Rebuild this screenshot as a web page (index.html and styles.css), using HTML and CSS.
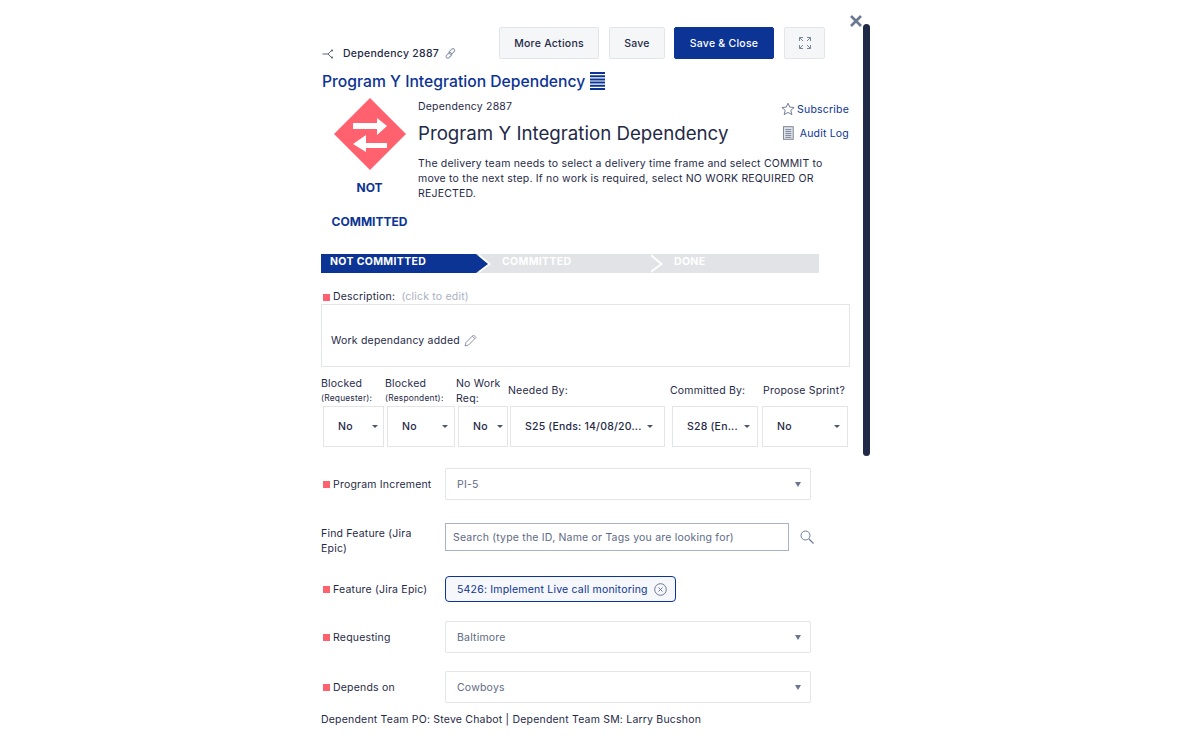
FILE: index.html
```html
<!DOCTYPE html>
<html lang="en">
<head>
    <meta charset="UTF-8">
    <meta name="viewport" content="width=device-width, initial-scale=1.0">
    <title>Dependency 2887</title>
    <link rel="stylesheet" href="styles.css">
</head>
<body>
    <button class="close-btn" aria-label="Close">
        <svg width="14" height="14" viewBox="0 0 14 14"><path d="M2 2 L12 12 M12 2 L2 12" stroke="#6b7690" stroke-width="2.6" fill="none"/></svg>
    </button>
    <div class="scrollbar"></div>

    <div class="container">
        <div class="top-row">
            <div class="crumb">
                <svg class="crumb-icon" width="12" height="10" viewBox="0 0 12 10"><path d="M0.5 5 H6 L9.5 1.5 M6 5 L9.5 8.5" stroke="#4a556f" stroke-width="0.9" fill="none"/><circle cx="10" cy="1.5" r="1" fill="#4a556f"/><circle cx="10" cy="8.5" r="1" fill="#4a556f"/></svg>
                <span class="crumb-text">Dependency 2887</span>
                <svg width="11" height="11" viewBox="0 0 11 11"><g fill="none" stroke="#8a93a8" stroke-width="1"><rect x="5.2" y="0.3" width="3.4" height="6.4" rx="1.7" transform="rotate(45 6.9 3.5)"/><rect x="2.2" y="4.2" width="3.4" height="6.4" rx="1.7" transform="rotate(45 3.9 7.4)"/></g></svg>
            </div>
            <div class="actions">
                <button class="btn btn-more">More Actions</button>
                <button class="btn btn-save">Save</button>
                <button class="btn btn-primary">Save &amp; Close</button>
                <button class="btn btn-expand" aria-label="Expand">
                    <svg width="12" height="12" viewBox="0 0 12 12"><path d="M0.5 4 V0.5 H4 M0.5 0.5 L4 4 M8 0.5 H11.5 V4 M11.5 0.5 L8 4 M0.5 8 V11.5 H4 M0.5 11.5 L4 8 M8 11.5 H11.5 V8 M11.5 11.5 L8 8" stroke="#7b8599" stroke-width="1" fill="none"/></svg>
                </button>
            </div>
        </div>

        <h2 class="page-title">Program Y Integration Dependency
            <svg width="15" height="20" viewBox="0 0 15 20"><path d="M0 1 H15 M0 4.2 H15 M0 7.4 H15 M0 10.6 H15 M0 13.8 H15 M0 17 H15" stroke="#0c3494" stroke-width="2" fill="none"/></svg>
        </h2>

        <div class="summary">
            <div class="status-col">
                <svg width="72" height="72" viewBox="0 0 72 72">
                    <path d="M36 0 L72 36 L36 72 L0 36 Z" fill="#ff626e"/>
                    <path d="M19 25 H43 V20 L53 28 L43 37 V31 H19 Z" fill="#fff"/>
                    <path d="M53 45 H32 V37 L19 46 L32 54 V50 H53 Z" fill="#fff"/>
                </svg>
                <div class="status-label">NOT</div>
                <div class="status-label">COMMITTED</div>
            </div>
            <div class="summary-main">
                <div class="summary-id">Dependency 2887</div>
                <h1 class="summary-title">Program Y Integration Dependency</h1>
                <p class="summary-text">The delivery team needs to select a delivery time frame and select COMMIT to move to the next step. If no work is required, select NO WORK REQUIRED OR REJECTED.</p>
            </div>
            <div class="summary-links">
                <a class="side-link">
                    <svg width="15" height="14" viewBox="0 0 15 14"><path d="M7.5 0.8 L9.4 5 L14 5.4 L10.5 8.4 L11.6 13 L7.5 10.6 L3.4 13 L4.5 8.4 L1 5.4 L5.6 5 Z" fill="none" stroke="#6b7690" stroke-width="1"/></svg>
                    Subscribe
                </a>
                <a class="side-link side-link-log">
                    <svg width="11" height="14" viewBox="0 0 11 14"><rect x="0.5" y="0.5" width="10" height="13" fill="#dfe2e8" stroke="#7b8599"/><path d="M2.5 3.5 H8.5 M2.5 5.5 H8.5 M2.5 7.5 H8.5 M2.5 9.5 H8.5 M2.5 11.5 H8.5" stroke="#7b8599" stroke-width="1"/></svg>
                    Audit Log
                </a>
            </div>
        </div>

        <div class="steps">
            <div class="step step-active">NOT COMMITTED</div>
            <div class="step step-two">COMMITTED</div>
            <div class="step step-three">DONE</div>
        </div>

        <div class="desc-label"><span class="req"></span>Description: <span class="hint">(click to edit)</span></div>
        <div class="desc-box">
            Work dependancy added
            <svg width="13" height="13" viewBox="0 0 13 13"><path d="M1 12 L2 8.5 L9.5 1 L12 3.5 L4.5 11 Z M8.3 2.2 L10.8 4.7" fill="none" stroke="#8a93a8" stroke-width="1"/></svg>
        </div>

        <div class="fields">
            <div class="field field-a">
                <label>Blocked<small>(Requester):</small></label>
                <div class="mini-select">No</div>
            </div>
            <div class="field field-b">
                <label>Blocked<small>(Respondent):</small></label>
                <div class="mini-select">No</div>
            </div>
            <div class="field field-c">
                <label>No Work Req:</label>
                <div class="mini-select">No</div>
            </div>
            <div class="field field-d">
                <label>Needed By:</label>
                <div class="mini-select">S25 (Ends: 14/08/20...</div>
            </div>
            <div class="field field-e">
                <label>Committed By:</label>
                <div class="mini-select">S28 (En...</div>
            </div>
            <div class="field field-f">
                <label>Propose Sprint?</label>
                <div class="mini-select">No</div>
            </div>
        </div>

        <div class="form-row row-pi">
            <div class="form-label"><span class="req"></span>Program Increment</div>
            <div class="select-box">PI-5</div>
        </div>
        <div class="form-row row-find">
            <div class="form-label label-wrap">Find Feature (Jira Epic)</div>
            <div class="search-box">Search (type the ID, Name or Tags you are looking for)</div>
            <svg class="search-icon" width="14" height="14" viewBox="0 0 14 14"><circle cx="5.5" cy="5.5" r="4.5" fill="none" stroke="#6b7f9c" stroke-width="1"/><path d="M9 9 L13.5 13.5" stroke="#6b7f9c" stroke-width="1.2"/></svg>
        </div>
        <div class="form-row row-feature">
            <div class="form-label"><span class="req"></span>Feature (Jira Epic)</div>
            <div class="tag">5426: Implement Live call monitoring
                <svg width="13" height="13" viewBox="0 0 13 13"><circle cx="6.5" cy="6.5" r="5.8" fill="none" stroke="#5e6a85" stroke-width="0.9"/><path d="M4.5 4.5 L8.5 8.5 M8.5 4.5 L4.5 8.5" stroke="#5e6a85" stroke-width="0.9"/></svg>
            </div>
        </div>
        <div class="form-row row-req">
            <div class="form-label"><span class="req"></span>Requesting</div>
            <div class="select-box">Baltimore</div>
        </div>
        <div class="form-row row-dep">
            <div class="form-label"><span class="req"></span>Depends on</div>
            <div class="select-box">Cowboys</div>
        </div>
        <div class="team-line">Dependent Team PO: Steve Chabot | Dependent Team SM: Larry Bucshon</div>
    </div>
</body>
</html>
```

FILE: styles.css
```css
html, body {
    margin: 0;
    height: 100%;
    overflow: hidden;
    background: #fff;
}

body {
    font-family: Inter, "Noto Sans", sans-serif;
    font-size: 10.5px;
    letter-spacing: 0.2px;
    color: #1f2a47;
    position: relative;
}

.container {
    width: 530px;
    margin-left: 321px;
    padding-top: 27px;
}

.close-btn {
    position: absolute;
    left: 849px;
    top: 14px;
    padding: 0;
    border: none;
    background: none;
    line-height: 0;
}

.scrollbar {
    position: absolute;
    left: 863px;
    top: 24px;
    width: 7px;
    height: 432px;
    background: #1f2a47;
    border-radius: 4px;
}

.top-row {
    display: flex;
    justify-content: space-between;
    align-items: flex-end;
    width: 504px;
}

.crumb {
    display: flex;
    align-items: center;
    margin-bottom: -1px;
}

.crumb-icon {
    margin: 0 9px 0 1px;
}

.crumb-text {
    font-weight: 500;
    letter-spacing: 0.27px;
    margin-right: 6px;
}

.actions {
    display: flex;
}

.btn {
    height: 32px;
    font-family: inherit;
    font-size: 10.5px;
    font-weight: 500;
    letter-spacing: 0.25px;
    color: #1f2a47;
    background: #f5f6f7;
    border: 1px solid #e3e5e9;
    border-radius: 2px;
    padding: 0;
}

.btn-more { width: 100px; margin-right: 10px; }
.btn-save { width: 56px; margin-right: 9px; }
.btn-primary { width: 100px; margin-right: 10px; background: #0c3494; border-color: #0c3494; color: #fff; }
.btn-expand { width: 41px; line-height: 0; }

.page-title {
    margin: 11px 0 0 1px;
    height: 24px;
    font-size: 15.7px;
    font-weight: 500;
    line-height: 24px;
    letter-spacing: 0;
    color: #0c3494;
    display: flex;
    align-items: center;
    gap: 5px;
}

.summary {
    display: flex;
    margin-top: 3px;
}

.status-col {
    width: 97px;
    flex-shrink: 0;
    text-align: center;
}

.status-col svg {
    display: block;
    margin: 1px 0 1px 13px;
}

.status-label {
    font-size: 12px;
    font-weight: 700;
    letter-spacing: 0;
    color: #0c3494;
    line-height: 34px;
}

.summary-main {
    width: 412px;
    flex-shrink: 0;
}

.summary-id {
    line-height: 14px;
    margin-top: 3px;
}

.summary-title {
    margin: 6px 0 0;
    font-size: 18.7px;
    font-weight: 400;
    line-height: 28px;
    letter-spacing: 0;
}

.summary-text {
    margin: 8px 0 0;
    line-height: 15px;
}

.summary-links {
    width: 68px;
    flex-shrink: 0;
    margin-left: -49px;
    margin-top: 5px;
}

.side-link {
    display: flex;
    align-items: center;
    gap: 2px;
    height: 14px;
    margin-bottom: 10px;
    color: #0c3494;
    white-space: nowrap;
}

.side-link-log {
    gap: 6px;
    margin-left: 2px;
}

.steps {
    display: flex;
    width: 498px;
    height: 19px;
    margin-top: 15px;
    background: #e1e3e6;
    color: #fff;
    font-weight: 700;
    line-height: 15px;
    letter-spacing: 0.35px;
}

.step {
    position: relative;
    height: 19px;
    box-sizing: border-box;
}

.step-active {
    width: 155px;
    padding-left: 9px;
    background: #0c3494;
}

.step-active::after,
.step-two::after {
    content: "";
    position: absolute;
    top: 0;
    border-left: 12px solid #0c3494;
    border-top: 10px solid transparent;
    border-bottom: 9px solid transparent;
    filter: drop-shadow(3px 0 0 #fff);
    z-index: 1;
}

.step-active::after {
    left: 155px;
}

.step-two {
    width: 174px;
    padding-left: 26px;
}

.step-two::after {
    left: 172px;
    border-left-color: #e1e3e6;
}

.step-three {
    padding-left: 24px;
}

.desc-label {
    margin-top: 17px;
    line-height: 14px;
    display: flex;
    align-items: center;
    white-space: pre;
}

.req {
    width: 7px;
    height: 7px;
    background: #ff626e;
    margin: 0 3px 0 2px;
    flex-shrink: 0;
}

.hint {
    color: #a9b0bf;
    margin-left: 3px;
}

.desc-box {
    height: 63px;
    box-sizing: border-box;
    border: 1px solid #e3e5e9;
    padding: 9px 0 0 9px;
    display: flex;
    align-items: center;
    gap: 4px;
    width: 529px;
}

.fields {
    display: flex;
    align-items: flex-end;
    margin-top: 9px;
}

.field label {
    display: block;
    line-height: 15px;
}

.field small {
    display: block;
    font-size: 8.4px;
    line-height: 15px;
}

.field-d label,
.field-e label,
.field-f label {
    margin-bottom: 8px;
}

.mini-select {
    height: 41px;
    box-sizing: border-box;
    border: 1px solid #e3e5e9;
    padding-left: 14px;
    font-weight: 500;
    display: flex;
    align-items: center;
    position: relative;
    white-space: nowrap;
}

.mini-select::after {
    content: "";
    position: absolute;
    top: 18px;
    right: 5px;
    border-left: 3.5px solid transparent;
    border-right: 3.5px solid transparent;
    border-top: 3.5px solid #4a556f;
}

.field-a { width: 64px; }
.field-a .mini-select { width: 61px; margin-left: 2px; }
.field-b { width: 73px; }
.field-b .mini-select { width: 68px; margin-left: 2px; }
.field-b .mini-select::after { right: 6px; }
.field-c { width: 52px; margin-left: -2px; }
.field-c .mini-select { width: 50px; margin-left: 2px; }
.field-c .mini-select::after { right: 4px; }
.field-d { width: 157px; }
.field-d .mini-select { width: 155px; margin-left: 2px; }
.field-d .mini-select::after { right: 11px; }
.field-e { width: 88px; margin-left: 5px; }
.field-e .mini-select { width: 86px; margin-left: 2px; }
.field-e .mini-select::after { right: 7px; }
.field-f { margin-left: 5px; }
.field-f .mini-select { width: 86px; margin-left: -1px; }
.field-f .mini-select::after { right: 7px; }

.form-row {
    display: flex;
    align-items: center;
}

.form-label {
    width: 124px;
    flex-shrink: 0;
    display: flex;
    align-items: center;
    line-height: 15px;
}

.label-wrap {
    box-sizing: border-box;
    padding-right: 18px;
    margin-top: 4px;
    margin-bottom: -4px;
}

.select-box {
    width: 366px;
    height: 32px;
    box-sizing: border-box;
    border: 1px solid #e3e5e9;
    border-radius: 2px;
    padding-left: 11px;
    display: flex;
    align-items: center;
    color: #5e6a85;
    position: relative;
}

.select-box::after {
    content: "";
    position: absolute;
    right: 9px;
    top: 13px;
    border-left: 3px solid transparent;
    border-right: 3px solid transparent;
    border-top: 5px solid #6b7690;
}

.row-pi { margin-top: 21px; }
.row-find { margin-top: 22px; }
.row-feature { margin-top: 24px; }
.row-req { margin-top: 19px; }
.row-dep { margin-top: 18px; }

.search-box {
    width: 344px;
    height: 28px;
    box-sizing: border-box;
    border: 1px solid #a9b3c6;
    padding-left: 7px;
    display: flex;
    align-items: center;
    color: #5e6a85;
}

.search-icon {
    margin-left: 11px;
}

.tag {
    height: 26px;
    box-sizing: border-box;
    width: 231px;
    border: 1px solid #0c3494;
    border-radius: 4px;
    background: #f5f7fa;
    padding-left: 11px;
    display: flex;
    align-items: center;
    gap: 6px;
    color: #0c3494;
    white-space: nowrap;
}

.team-line {
    margin-top: 9px;
    line-height: 15px;
}
```
